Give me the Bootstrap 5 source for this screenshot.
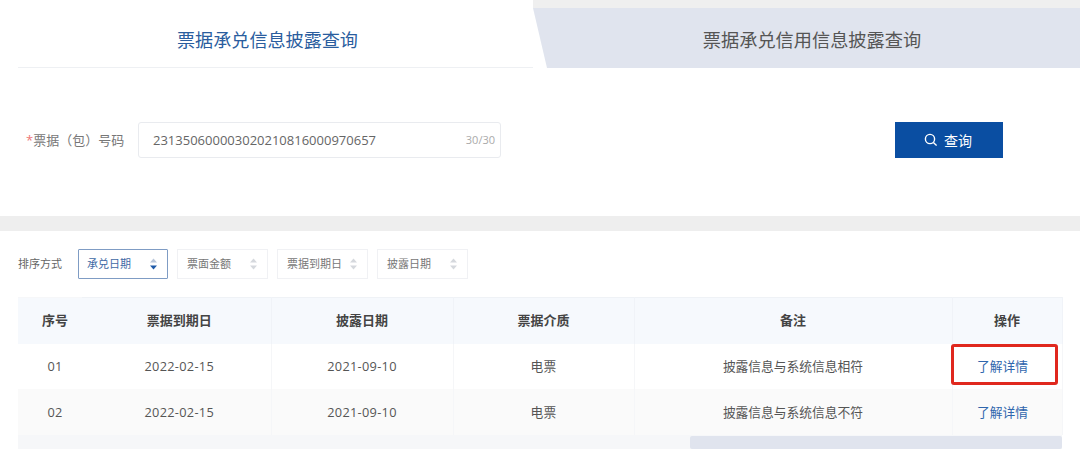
<!DOCTYPE html>
<html lang="zh-CN">
<head>
<meta charset="utf-8">
<title>票据承兑信息披露查询</title>
<link rel="stylesheet" href="https://cdn.jsdelivr.net/npm/bootstrap@5.3.0/dist/css/bootstrap.min.css">
<style>
html,body{height:455px;overflow:hidden}
body{background:#fff;font-family:"Open Sans","Noto Sans CJK SC",sans-serif;color:#555;font-size:13px}
.tab-strip{height:68px}
.tab-on{width:515px;height:68px;margin-left:18px;border-bottom:1px solid #eef0f3;color:#2a5d9e;font-size:18.1px;line-height:80px;text-align:center;padding-right:16px}
.tab-off-wrap{flex:1;background:linear-gradient(#efefef 8px,transparent 8px)}
.tab-off{height:100%;background:#e0e4ee;color:#555;font-size:18.2px;line-height:64px;padding:8px 0 0 11px;text-align:center;clip-path:polygon(0 8px,100% 8px,100% 100%,14px 100%)}
.search-row{height:148px;padding:54px 77px 0 26px;align-items:flex-start}
.req{color:#e77}
.lbl{font-size:13px;color:#777;width:112px;line-height:36px;white-space:nowrap}
.box{width:363px;height:36px;border:1px solid #e9ebef;border-radius:3px;padding:0 0 0 14px;line-height:34px;color:#666}
.cnt{font-size:11px;color:#aaa;padding-right:5px}
.go{width:108px;height:36px;background:#0a4ea2;border:0;border-radius:0;color:#fff;font-size:14px;padding:0 2px 0 0;gap:7px}
.go:hover{background:#0a4ea2;color:#fff}
.band{height:15px;background:#eeeeee}
.sort-row{height:66px;padding:18px 0 0 18px}
.sort-lbl{font-size:11px;color:#666;width:60px;line-height:30px}
.chip{height:30px;width:91px;border:1px solid #f0f1f4;padding:0 9px;font-size:11px;line-height:28px;color:#777;margin-right:9px}
.chip-on{width:90px;border-color:#7f9cc4;color:#3f6aa5;border-radius:1px;padding:0 9px 0 8px}
.tbl-wrap{margin:0 18px;width:1044px;height:152px;background:#f6f7f9;position:relative}
.tbl{table-layout:fixed;width:1044px;margin:0;--bs-table-bg:transparent;--bs-table-border-color:transparent;text-align:center;color:#555}
.tbl th,.tbl td{padding:0;vertical-align:middle;font-size:13px;border:0}
.tbl th{height:46px;background:#f6f9fd;color:#444;font-weight:700;border-right:1px solid #f0f3f8;border-top:1px solid #eff2f6}
.tbl td{height:45px;padding-top:1px;background:#fff;font-size:12.75px;letter-spacing:.3px;border-right:1px solid #f5f6f8}
.tbl tr.alt td{background:#fafafa;height:46px;padding-top:2px}
.tbl th:first-child,.tbl td:first-child{box-shadow:4px 0 6px rgba(0,0,0,.07);position:relative;z-index:1;background:#fff;border:0;padding-left:10px}
.tbl th:first-child{background:#f6f9fd}
.tbl tr.alt td:first-child{background:#fafafa}
.tbl th:nth-child(2),.tbl td:nth-child(2){padding-left:6px}
.tbl td:nth-child(5){letter-spacing:0}
.tbl td:last-child{padding-right:9px;letter-spacing:0}
.tbl a{color:#2f66ad;text-decoration:none}
.mark-box{position:absolute;left:933px;top:47px;width:107px;height:41px;border:3px solid #e0281e;border-radius:3px;pointer-events:none}
.track{position:absolute;left:0;right:0;bottom:0;height:15px}
.thumb{position:absolute;left:672px;right:0;top:2px;bottom:0;background:#e0e4ee;border-radius:2px}
</style>
</head>
<body>
<div class="tab-strip d-flex">
  <div class="tab-on">票据承兑信息披露查询</div>
  <div class="tab-off-wrap"><div class="tab-off">票据承兑信用信息披露查询</div></div>
</div>
<div class="search-row d-flex">
  <div class="lbl"><span class="req">*</span>票据（包）号码</div>
  <div class="box d-flex justify-content-between"><span>231350600003020210816000970657</span><span class="cnt">30/30</span></div>
  <button type="button" class="btn go ms-auto d-flex align-items-center justify-content-center">
    <svg width="13" height="14" viewBox="0 0 13 14" fill="none" stroke="#fff" stroke-width="1.4"><circle cx="6" cy="6" r="4.6"/><path d="M9.4 9.4 12.6 12.6"/></svg>
    <span>查询</span>
  </button>
</div>
<div class="band"></div>
<div class="sort-row d-flex">
  <div class="sort-lbl">排序方式</div>
  <div class="chip chip-on d-flex justify-content-between align-items-center"><span>承兑日期</span>
    <svg width="9" height="12" viewBox="0 0 9 12"><path d="M4.5 .5 8 4.5H1z" fill="#b9c6da"/><path d="M4.5 11.5 8 7.5H1z" fill="#1f5aa8"/></svg></div>
  <div class="chip d-flex justify-content-between align-items-center"><span>票面金额</span>
    <svg width="9" height="12" viewBox="0 0 9 12" fill="#d5d8dd"><path d="M4.5 .5 8 4.5H1z"/><path d="M4.5 11.5 8 7.5H1z"/></svg></div>
  <div class="chip d-flex justify-content-between align-items-center"><span>票据到期日</span>
    <svg width="9" height="12" viewBox="0 0 9 12" fill="#d5d8dd"><path d="M4.5 .5 8 4.5H1z"/><path d="M4.5 11.5 8 7.5H1z"/></svg></div>
  <div class="chip d-flex justify-content-between align-items-center"><span>披露日期</span>
    <svg width="9" height="12" viewBox="0 0 9 12" fill="#d5d8dd"><path d="M4.5 .5 8 4.5H1z"/><path d="M4.5 11.5 8 7.5H1z"/></svg></div>
</div>
<div class="tbl-wrap">
  <table class="table tbl">
    <colgroup><col style="width:64px"><col style="width:189px"><col style="width:182px"><col style="width:181px"><col style="width:318px"><col style="width:110px"></colgroup>
    <thead><tr><th>序号</th><th>票据到期日</th><th>披露日期</th><th>票据介质</th><th>备注</th><th>操作</th></tr></thead>
    <tbody>
      <tr><td>01</td><td>2022-02-15</td><td>2021-09-10</td><td>电票</td><td>披露信息与系统信息相符</td><td><a href="#">了解详情</a></td></tr>
      <tr class="alt"><td>02</td><td>2022-02-15</td><td>2021-09-10</td><td>电票</td><td>披露信息与系统信息不符</td><td><a href="#">了解详情</a></td></tr>
    </tbody>
  </table>
  <div class="mark-box"></div>
  <div class="track"><div class="thumb"></div></div>
</div>
<script src="https://cdn.jsdelivr.net/npm/bootstrap@5.3.0/dist/js/bootstrap.bundle.min.js"></script>
</body>
</html>
